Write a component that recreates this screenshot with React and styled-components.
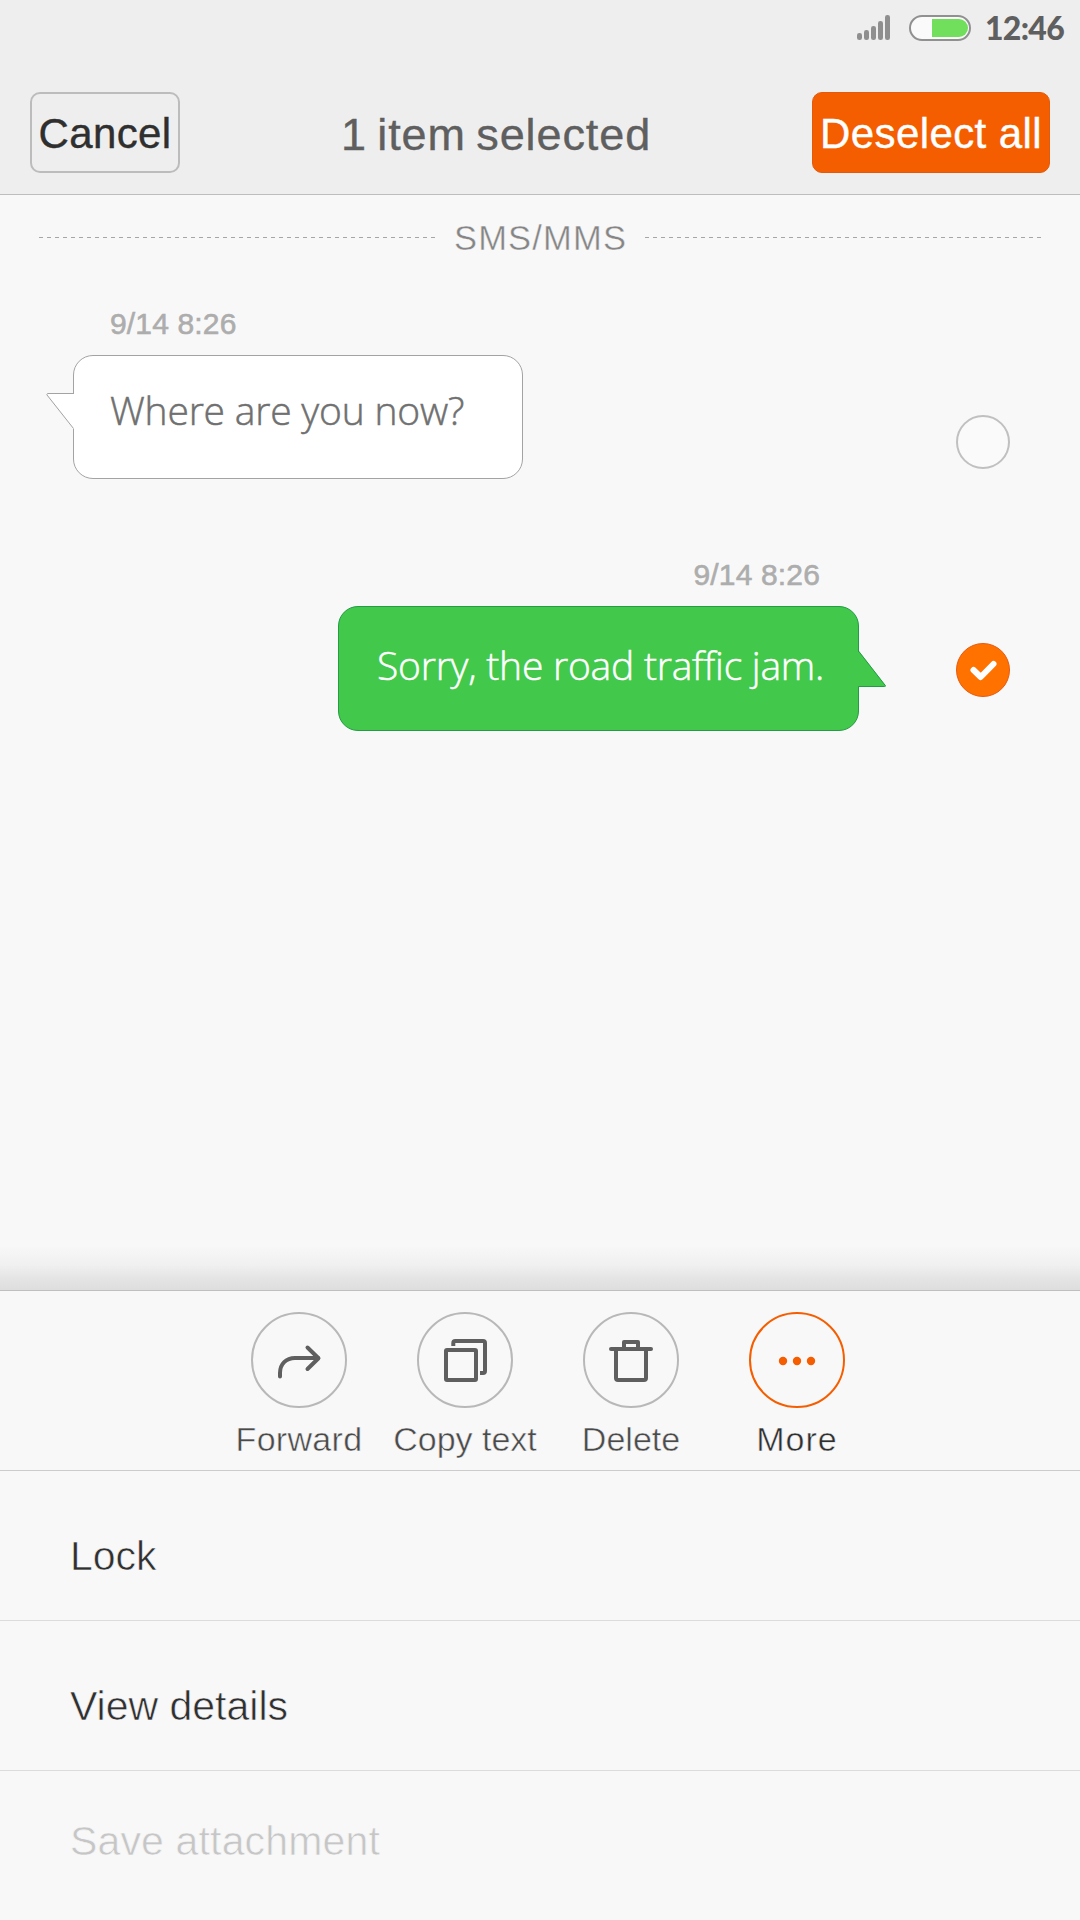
import React from "react";
import styled, { createGlobalStyle } from "styled-components";

const GlobalStyle = createGlobalStyle`
  * { box-sizing: border-box; }
  body { margin: 0; background: #f8f8f8; }
  button { font: inherit; padding: 0; cursor: pointer; }
`;

const Screen = styled.div`
  width: 1080px;
  height: 1920px;
  display: flex;
  flex-direction: column;
  overflow: hidden;
  background: #f8f8f8;
  color: #2f2f2f;
  font-family: "Liberation Sans", Arial, sans-serif;
`;

const Header = styled.header`
  flex: none;
  height: 195px;
  background: #eeeeee;
  border-bottom: 1px solid #bdbdbd;
`;

const StatusBar = styled.div`
  height: 56px;
  padding-right: 17px;
  display: flex;
  justify-content: flex-end;
  align-items: center;
`;

const Signal = styled.svg`
  width: 34px;
  height: 26px;
  margin-right: 18px;
`;

const Battery = styled.svg`
  width: 62px;
  height: 26px;
  margin-right: 14px;
`;

const Clock = styled.time`
  width: 78px;
  font-family: Lato, sans-serif;
  font-weight: 900;
  font-size: 32px;
  line-height: 56px;
  letter-spacing: -0.7px;
  color: #5f5f5f;
  white-space: nowrap;
`;

const TitleBar = styled.div`
  margin-top: 36px;
  height: 81px;
  padding: 0 30px;
  display: flex;
  justify-content: space-between;
`;

const HeaderButton = styled.button`
  && {
    width: ${(p) => (p.$primary ? 238 : 150)}px;
    height: 81px;
    padding-top: 3px;
    border: ${(p) => (p.$primary ? "1px solid #e25a0a" : "2px solid #bcbcbc")};
    border-radius: 10px;
    background: ${(p) => (p.$primary ? "#f55e00" : "transparent")};
    color: ${(p) => (p.$primary ? "#ffffff" : "#2f2f2f")};
    font-size: 42px;
    letter-spacing: 0.4px;
    -webkit-text-stroke: 0.4px currentColor;
    white-space: nowrap;
  }
`;

const Title = styled.h1`
  margin: 0;
  padding-top: 2px;
  font-size: 45px;
  font-weight: 400;
  line-height: 81px;
  color: #5f5f5f;
  letter-spacing: 0.9px;
  word-spacing: -3px;
  -webkit-text-stroke: 0.4px currentColor;
`;

const Thread = styled.main`
  flex: none;
  height: 1051px;
`;

const Divider = styled.div`
  height: 85px;
  padding: 0 39px;
  display: flex;
  align-items: center;
  justify-content: space-between;
`;

const Dashes = styled.span`
  width: 396px;
  height: 1px;
  background: repeating-linear-gradient(90deg, #a6a6a6 0 4px, transparent 4px 8px);
`;

const DividerLabel = styled.span`
  padding-top: 2px;
  font-size: 34.5px;
  letter-spacing: 1.2px;
  margin-right: -1.2px;
  color: #858585;
  -webkit-text-stroke: 0.4px #f8f8f8;
`;

const Message = styled.section`
  display: flex;
  justify-content: space-between;
  padding: 0 70px 0 ${(p) => (p.$sent ? 338 : 73)}px;
  margin-top: ${(p) => (p.$sent ? 76 : 24)}px;
`;

const Body = styled.div`
  display: flex;
  flex-direction: column;
  align-items: ${(p) => (p.$sent ? "flex-end" : "flex-start")};
`;

const Stamp = styled.time`
  height: 51px;
  padding: 3px 39px 0 37px;
  font-size: 30px;
  line-height: 34px;
  letter-spacing: 0.15px;
  color: #adadad;
  -webkit-text-stroke: 0.6px #adadad;
`;

const Bubble = styled.div`
  position: relative;
  width: ${(p) => (p.$sent ? 521 : 450)}px;
  height: ${(p) => (p.$sent ? 125 : 124)}px;
  padding: ${(p) => (p.$sent ? "0 0 8px 38px" : "0 0 16px 36px")};
  display: flex;
  align-items: center;
  border: 1px solid ${(p) => (p.$sent ? "#239c45" : "#a3a3a3")};
  border-radius: 20px;
  background: ${(p) => (p.$sent ? "#42c84a" : "#ffffff")};
  color: ${(p) => (p.$sent ? "#ffffff" : "#707070")};
  font-family: "Open Sans", "Noto Sans", sans-serif;
  font-weight: 300;
  font-size: 39px;
  letter-spacing: ${(p) => (p.$sent ? -0.23 : -0.2)}px;
  -webkit-text-stroke: 0.5px currentColor;
  white-space: nowrap;
`;

const Tail = styled.svg`
  position: absolute;
  width: 30px;
  height: 38px;
  top: ${(p) => (p.$sent ? 43 : 36)}px;
  left: ${(p) => (p.$sent ? 517 : -28)}px;
`;

const Selector = styled.svg`
  width: 54px;
  height: 54px;
  margin-top: ${(p) => (p.$sent ? 88 : 111)}px;
`;

const Sheet = styled.footer`
  flex: none;
  display: flex;
  flex-direction: column;
`;

const Shade = styled.div`
  height: 46px;
  margin-top: -1px;
  border-bottom: 1px solid #bfbfbf;
  background: linear-gradient(#f8f8f8, #f0f0f0 45%, #e4e4e4 75%, #dedede);
`;

const Actions = styled.nav`
  height: 180px;
  padding: 21px 0 0 216px;
  display: flex;
  border-bottom: 1px solid #cccccc;
`;

const Action = styled.button`
  && {
    width: 166px;
    border: 0;
    background: none;
    display: flex;
    flex-direction: column;
    align-items: center;
    color: ${(p) => (p.$active ? "#2f2f2f" : "#4a4a4a")};
    font-size: 34px;
    line-height: 40px;
    letter-spacing: ${(p) => p.$tracking || 0}px;
    white-space: nowrap;
    -webkit-text-stroke: 0.5px #f8f8f8;
  }
`;

const ActionIcon = styled.svg`
  width: 96px;
  height: 96px;
  margin-bottom: 11px;
  border-radius: 50%;
  border: 2px solid ${(p) => (p.$active ? "#f55e00" : "#b8b8b8")};
  fill: none;
  stroke: #5f5f5f;
  stroke-width: 4;
  stroke-linecap: round;
  stroke-linejoin: round;
`;

const MenuItem = styled.button`
  && {
    height: ${(p) => (p.$disabled ? 149 : 150)}px;
    padding: ${(p) => (p.$disabled ? "0 0 8px 70px" : "22px 0 0 70px")};
    border: 0;
    border-bottom: ${(p) => (p.$disabled ? "0" : "1px solid #dcdcdc")};
    background: none;
    text-align: left;
    color: ${(p) => (p.$disabled ? "#c6c6c6" : "#2f2f2f")};
    font-size: 41px;
    letter-spacing: ${(p) => (p.$disabled ? 0.15 : 0)}px;
    -webkit-text-stroke: 0.6px #f8f8f8;
  }
`;

const bars = [33, 30, 26, 21, 15];

const icons = {
  forward: (
    <>
      <path d="M29 64.5V61C29 52 35 46 44 46H67" />
      <path d="M56.5 35.5L67.5 46.2L56.5 57" />
    </>
  ),
  copy: (
    <>
      <rect x="29" y="38" width="30" height="30" rx="1" />
      <path d="M36.300 34V31Q36.300 29 38.300 29H66Q68 29 68 31V59Q68 61 66 61H63" strokeLinecap="butt" />
    </>
  ),
  trash: (
    <>
      <path d="M28 37H68" />
      <path d="M41 36V30H55V36" strokeLinecap="butt" />
      <path d="M33 37V66Q33 68 35 68H61Q63 68 63 66V37" />
    </>
  ),
  more: (
    <g fill="#f55e00" stroke="none">
      <circle cx="34" cy="49" r="4.2" />
      <circle cx="48" cy="49" r="4.2" />
      <circle cx="62" cy="49" r="4.2" />
    </g>
  ),
};

const actions = [
  { label: "Forward", icon: "forward", tracking: 0.3 },
  { label: "Copy text", icon: "copy" },
  { label: "Delete", icon: "trash" },
  { label: "More", icon: "more", active: true, tracking: 1 },
];

function ChatMessage({ time, text, sent, checked }) {
  return (
    <Message $sent={sent}>
      <Body $sent={sent}>
        <Stamp>{time}</Stamp>
        <Bubble $sent={sent}>
          {text}
          <Tail $sent={sent} viewBox="0 0 30 38">
            {sent ? (
              <>
                <path d="M0 2H3.500L29.500 35.500Q30 36.500 28.500 36.500H0Z" fill="#42c84a" />
                <path d="M2.500 1L29.300 35.500Q29.800 36.500 28.500 36.500H2.500" fill="none" stroke="#239c45" />
              </>
            ) : (
              <>
                <path d="M30 1.500H1L27.500 37H30Z" fill="#ffffff" />
                <path d="M28 1.500H1.500Q0.500 2 1 3L27.500 36.500" fill="none" stroke="#a3a3a3" />
              </>
            )}
          </Tail>
        </Bubble>
      </Body>
      <Selector $sent={sent} viewBox="0 0 54 54">
        {checked ? (
          <>
            <circle cx="27" cy="27" r="26.5" fill="#ff7200" stroke="#e85a10" />
            <path d="M17.500 27L24.700 34L37.500 21" fill="none" stroke="#fff" strokeWidth="6" strokeLinecap="round" strokeLinejoin="round" />
          </>
        ) : (
          <circle cx="27" cy="27" r="26" fill="#fafafa" stroke="#c0c0c0" strokeWidth="2" />
        )}
      </Selector>
    </Message>
  );
}

export default function App() {
  return (
    <Screen>
      <GlobalStyle />
      <Header>
        <StatusBar>
          <Signal viewBox="857 15 34 26">
            {bars.map((top, i) => (
              <rect key={top} x={857 + i * 7} y={top} width="5" height={40 - top} rx="2.3" fill="#8f8f8f" />
            ))}
          </Signal>
          <Battery viewBox="0 0 62 26">
            <rect x="1" y="1" width="60" height="24" rx="12" fill="#fafafa" stroke="#909090" strokeWidth="2" />
            <path d="M23 4H50A9 9 0 0 1 50 22H23Z" fill="#72df5c" />
          </Battery>
          <Clock>12:46</Clock>
        </StatusBar>
        <TitleBar>
          <HeaderButton>Cancel</HeaderButton>
          <Title>1 item selected</Title>
          <HeaderButton $primary>Deselect all</HeaderButton>
        </TitleBar>
      </Header>
      <Thread>
        <Divider>
          <Dashes />
          <DividerLabel>SMS/MMS</DividerLabel>
          <Dashes />
        </Divider>
        <ChatMessage time="9/14 8:26" text="Where are you now?" />
        <ChatMessage time="9/14 8:26" text="Sorry, the road traffic jam." sent checked />
      </Thread>
      <Sheet>
        <Shade />
        <Actions>
          {actions.map((a) => (
            <Action key={a.label} $active={a.active} $tracking={a.tracking}>
              <ActionIcon $active={a.active} viewBox="2 2 92 92">
                {icons[a.icon]}
              </ActionIcon>
              {a.label}
            </Action>
          ))}
        </Actions>
        <MenuItem>Lock</MenuItem>
        <MenuItem>View details</MenuItem>
        <MenuItem $disabled>Save attachment</MenuItem>
      </Sheet>
    </Screen>
  );
}
